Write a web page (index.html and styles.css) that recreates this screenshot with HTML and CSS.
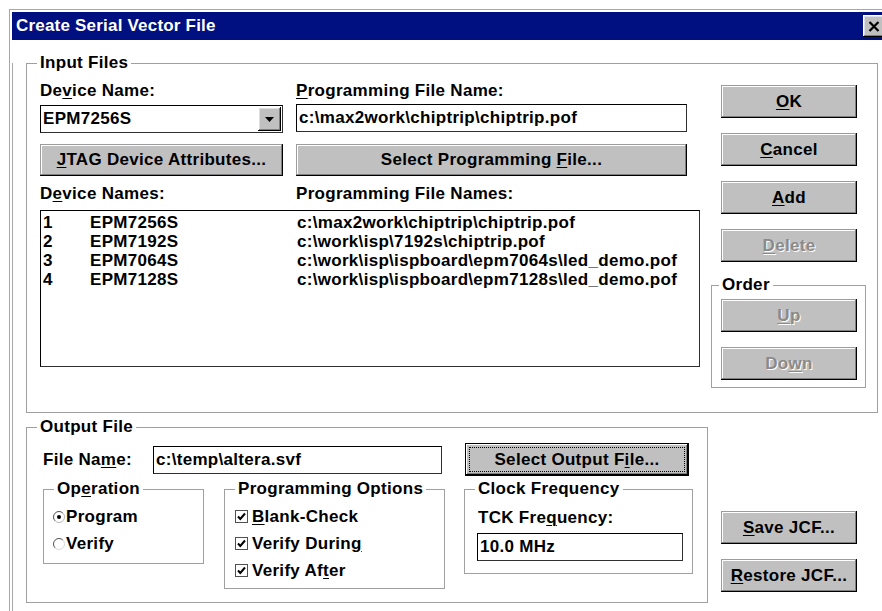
FILE: index.html
```html
<!DOCTYPE html>
<html lang="en">
<head>
<meta charset="utf-8">
<title>Create Serial Vector File</title>
<link rel="stylesheet" href="styles.css">
</head>
<body>
<div class="window">
  <div class="titlebar">
    <span class="title">Create Serial Vector File</span>
    <button class="close" type="button" aria-label="Close">
      <svg width="12" height="11" viewBox="0 0 12 11"><path d="M1.5 1 L10.5 10 M10.5 1 L1.5 10" stroke="#000" stroke-width="2.2" fill="none"/></svg>
    </button>
  </div>

  <div class="client">
    <section class="group group-input">
      <div class="legend">Input Files</div>
      <div class="input-body">
        <div class="left-col">
          <div class="pair labels">
            <span>De<u>v</u>ice Name:</span>
            <span><u>P</u>rogramming File Name:</span>
          </div>
          <div class="pair fields">
            <div class="combo">
              <span class="combo-value">EPM7256S</span>
              <span class="combo-arrow">
                <svg width="9" height="5" viewBox="0 0 9 5"><path d="M0 0 H9 L4.5 5 Z" fill="#000"/></svg>
              </span>
            </div>
            <div class="field">c:\max2work\chiptrip\chiptrip.pof</div>
          </div>
          <div class="pair buttons">
            <button class="btn btn-wide" type="button"><u>J</u>TAG Device Attributes...</button>
            <button class="btn btn-wide" type="button">Select Programming <u>F</u>ile...</button>
          </div>
          <div class="pair labels labels-list">
            <span>D<u>e</u>vice Names:</span>
            <span>Programming File Names:</span>
          </div>
          <div class="listbox">
            <div class="row"><span>1</span><span>EPM7256S</span><span>c:\max2work\chiptrip\chiptrip.pof</span></div>
            <div class="row"><span>2</span><span>EPM7192S</span><span>c:\work\isp\7192s\chiptrip.pof</span></div>
            <div class="row"><span>3</span><span>EPM7064S</span><span>c:\work\isp\ispboard\epm7064s\led_demo.pof</span></div>
            <div class="row"><span>4</span><span>EPM7128S</span><span>c:\work\isp\ispboard\epm7128s\led_demo.pof</span></div>
          </div>
        </div>

        <div class="right-col">
          <button class="btn" type="button"><u>O</u>K</button>
          <button class="btn" type="button"><u>C</u>ancel</button>
          <button class="btn" type="button"><u>A</u>dd</button>
          <button class="btn" type="button" disabled><u>D</u>elete</button>
          <section class="group group-order">
            <div class="legend">Order</div>
            <div class="order-body">
              <button class="btn" type="button" disabled><u>U</u>p</button>
              <button class="btn" type="button" disabled>Do<u>w</u>n</button>
            </div>
          </section>
        </div>
      </div>
    </section>

    <div class="lower">
      <section class="group group-output">
        <div class="legend">Output File</div>
        <div class="file-row">
          <span class="file-label">File Na<u>m</u>e:</span>
          <div class="field field-out">c:\temp\altera.svf</div>
          <button class="btn btn-default" type="button">Select Output F<u>i</u>le...</button>
        </div>
        <div class="opt-row">
          <section class="group group-op">
            <div class="legend">Op<u>e</u>ration</div>
            <div class="choices">
              <div class="choice">
                <svg class="radio" width="12" height="12" viewBox="0 0 12 12">
                  <path d="M9.89 2.11 A5.5 5.5 0 0 0 2.11 9.89" stroke="#505050" fill="none"/>
                  <path d="M2.11 9.89 A5.5 5.5 0 0 0 9.89 2.11" stroke="#b8b8b8" fill="none"/>
                  <circle cx="6" cy="6" r="2" fill="#000"/>
                </svg>
                <span>Program</span>
              </div>
              <div class="choice">
                <svg class="radio" width="12" height="12" viewBox="0 0 12 12">
                  <path d="M9.89 2.11 A5.5 5.5 0 0 0 2.11 9.89" stroke="#505050" fill="none"/>
                  <path d="M2.11 9.89 A5.5 5.5 0 0 0 9.89 2.11" stroke="#d8d8d8" fill="none"/>
                </svg>
                <span>Verify</span>
              </div>
            </div>
          </section>

          <section class="group group-prog">
            <div class="legend">Programming Options</div>
            <div class="choices">
              <div class="choice choice-check">
                <svg class="check" width="13" height="13" viewBox="0 0 13 13">
                  <rect x="0.5" y="0.5" width="12" height="12" fill="#fff" stroke="#505050"/>
                  <path d="M3 6.5 L5.3 9 L10 3.5" stroke="#000" stroke-width="2" fill="none"/>
                </svg>
                <span><u>B</u>lank-Check</span>
              </div>
              <div class="choice choice-check">
                <svg class="check" width="13" height="13" viewBox="0 0 13 13">
                  <rect x="0.5" y="0.5" width="12" height="12" fill="#fff" stroke="#505050"/>
                  <path d="M3 6.5 L5.3 9 L10 3.5" stroke="#000" stroke-width="2" fill="none"/>
                </svg>
                <span>Verify Durin<u>g</u></span>
              </div>
              <div class="choice choice-check">
                <svg class="check" width="13" height="13" viewBox="0 0 13 13">
                  <rect x="0.5" y="0.5" width="12" height="12" fill="#fff" stroke="#505050"/>
                  <path d="M3 6.5 L5.3 9 L10 3.5" stroke="#000" stroke-width="2" fill="none"/>
                </svg>
                <span>Verify Af<u>t</u>er</span>
              </div>
            </div>
          </section>

          <section class="group group-clock">
            <div class="legend">Clock Frequency</div>
            <div class="clock-label">TCK Fre<u>q</u>uency:</div>
            <div class="field field-clock">10.0 MHz</div>
          </section>
        </div>
      </section>

      <div class="jcf-col">
        <button class="btn" type="button"><u>S</u>ave JCF...</button>
        <button class="btn" type="button"><u>R</u>estore JCF...</button>
      </div>
    </div>
  </div>
</div>
</body>
</html>
```

FILE: styles.css
```css
html, body {
  margin: 0;
  background: #fff;
  overflow: hidden;
}

body {
  font-family: "Liberation Sans", Arial, sans-serif;
  font-weight: bold;
  font-size: 17px;
  line-height: 18px;
  letter-spacing: 0.3px;
  color: #000;
}

u {
  text-decoration: underline;
  text-underline-offset: 2px;
  text-decoration-thickness: 1px;
}

/* window frame */
.window {
  margin: 9px 0 0 9px;
  width: 880px;
  height: 602px;
  box-sizing: border-box;
  border-top: 1px solid #a8a8a8;
  border-left: 1px solid #a8a8a8;
  padding: 2px 0 0 2px;
}

.titlebar {
  height: 28px;
  background: #001080;
  color: #fff;
  display: flex;
  align-items: center;
}

.title {
  padding-left: 4px;
  letter-spacing: 0.2px;
}

.close {
  margin-left: auto;
  margin-right: 4px;
  width: 22px;
  height: 22px;
  padding: 0;
  border: 0;
  background: #c0c0c0;
  box-shadow: inset -1px -1px #000, inset 1px 1px #fff, inset -2px -2px #808080, inset 2px 2px #dfdfdf;
  display: flex;
  align-items: center;
  justify-content: center;
}

.client {
  border-left: 1px solid #a8a8a8;
  height: 571px;
  box-sizing: border-box;
}

/* group boxes */
.group {
  border: 1px solid #a0a0a0;
  box-sizing: border-box;
}

.legend {
  margin: -10px 0 0 10px;
  padding: 0 3px;
  background: #fff;
  width: max-content;
  height: 18px;
}

/* buttons */
.btn {
  display: block;
  width: 136px;
  height: 33px;
  padding: 0;
  margin: 0;
  border: 0;
  background: #c0c0c0;
  font: inherit;
  letter-spacing: inherit;
  color: #000;
  text-align: center;
  box-shadow: inset -1px -1px #000, inset 1px 1px #9c9c9c, inset -2px -2px #808080, inset 2px 2px #fff;
}

.btn:disabled {
  color: #8a8a8a;
  text-shadow: 1px 1px 0 #fff;
}

.btn-default {
  outline: 1px dotted #000;
  outline-offset: -5px;
  box-shadow: inset 0 0 0 1px #000, inset -2px -2px #000, inset 2px 2px #fff, inset -3px -3px #808080;
}

/* text fields */
.field,
.combo {
  height: 28px;
  box-sizing: border-box;
  border: 1px solid #303030;
  border-top-color: #000;
  border-left-color: #000;
  background: #fff;
  padding-left: 2px;
  line-height: 26px;
  white-space: nowrap;
  overflow: hidden;
}

/* input files */
.group-input {
  margin: 23px 0 0 13px;
  width: 852px;
  height: 350px;
}

.input-body {
  display: flex;
  margin-top: 10px;
  padding-left: 13px;
}

.left-col {
  width: 660px;
}

.pair {
  display: grid;
  grid-template-columns: 243px 391px;
  column-gap: 13px;
  align-items: start;
}

.labels {
  height: 18px;
  white-space: nowrap;
}

.fields {
  margin-top: 4px;
}

.combo {
  margin-top: 1px;
  display: flex;
  align-items: center;
  justify-content: space-between;
  padding-right: 1px;
}

.combo-arrow {
  width: 23px;
  height: 24px;
  background: #c0c0c0;
  box-shadow: inset -1px -1px #000, inset 1px 1px #fff, inset -2px -2px #808080, inset 2px 2px #dfdfdf;
  display: flex;
  align-items: center;
  justify-content: center;
}

.buttons {
  margin-top: 11px;
}

.btn-wide {
  width: 100%;
  height: 32px;
}

.labels-list {
  margin-top: 9px;
}

.listbox {
  margin-top: 7px;
  width: 660px;
  height: 157px;
  box-sizing: border-box;
  border: 1px solid #303030;
  border-top-color: #000;
  border-left-color: #000;
  padding-top: 2px;
}

.row {
  display: grid;
  grid-template-columns: 47px 207px 1fr;
  padding-left: 2px;
  height: 19px;
  line-height: 19px;
  white-space: nowrap;
}

.right-col {
  width: 136px;
  margin-left: 21px;
  padding-top: 3px;
  display: flex;
  flex-direction: column;
  gap: 15px;
}

.group-order {
  margin: 8px 0 0 -10px;
  width: 155px;
  height: 103px;
}

.group-order .legend {
  margin-left: 7px;
}

.order-body {
  margin: 5px 0 0 9px;
  display: flex;
  flex-direction: column;
  gap: 15px;
}

/* output file */
.lower {
  display: flex;
  margin-top: 14px;
  padding-left: 13px;
}

.group-output {
  width: 682px;
  height: 176px;
}

.file-row {
  display: flex;
  align-items: center;
  height: 33px;
  margin-top: 7px;
  padding-left: 16px;
}

.file-label {
  width: 110px;
}

.field-out {
  width: 289px;
}

.btn-default {
  width: 224px;
  margin-left: 23px;
}

.opt-row {
  display: flex;
  align-items: flex-start;
  margin-top: 13px;
  padding-left: 16px;
}

.group-op {
  width: 161px;
  height: 75px;
}

.group-prog {
  width: 221px;
  height: 100px;
  margin-left: 20px;
}

.group-clock {
  width: 229px;
  height: 85px;
  margin-left: 19px;
}

.choices {
  margin-top: 5px;
  padding-left: 9px;
}

.choice {
  display: flex;
  align-items: center;
  height: 27px;
  gap: 1px;
  white-space: nowrap;
}

.choice-check {
  gap: 4px;
}

.group-prog .choices {
  padding-left: 10px;
}

.clock-label {
  margin: 11px 0 0 13px;
  white-space: nowrap;
}

.field-clock {
  margin: 6px 0 0 12px;
  width: 206px;
}

.jcf-col {
  margin-left: 13px;
  padding-top: 84px;
  display: flex;
  flex-direction: column;
  gap: 15px;
}
```
